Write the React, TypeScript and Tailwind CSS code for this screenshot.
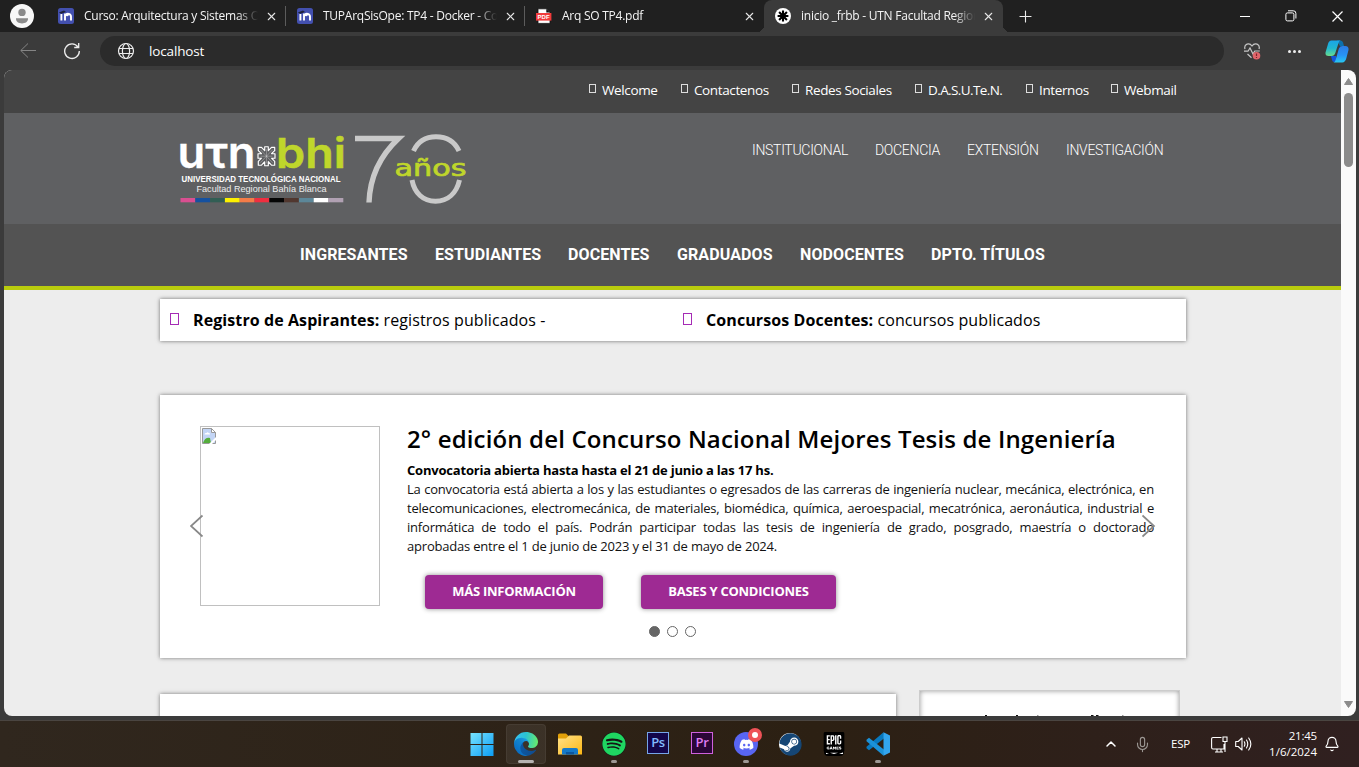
import React from "react";
import { X, Plus, ChevronUp, Mic, Bell } from "lucide-react";
import { FaSpotify, FaDiscord, FaSteam } from "react-icons/fa";
import { SiEpicgames } from "react-icons/si";

const UI = "font-['Open_Sans','Noto_Sans',sans-serif]";

function MoodleIcon() {
  return (
    <svg width="16" height="16" viewBox="0 0 16 16" className="shrink-0">
      <rect width="16" height="16" rx="2.5" fill="#4350af" />
      <path d="M3.4 6v6.6M7 12.6V8.8a1.9 1.9 0 0 1 3.4-1.1M7.4 7.2A3 3 0 0 1 13 8.8v3.8M7 5.5v7" stroke="#fff" strokeWidth="1.9" fill="none" />
      <path d="M0.8 4.6 6 2.6 8 4 3.4 5.8Z" fill="#20233c" />
    </svg>
  );
}

function PdfIcon() {
  return (
    <svg width="16" height="16" viewBox="0 0 16 16" className="shrink-0">
      <path d="M2 .8h8.5L14 4.2V15.4H2Z" fill="#fff" stroke="#111" strokeWidth=".8" />
      <path d="M10.3.8V4.4H14Z" fill="#111" />
      <rect x="0" y="5" width="15.4" height="7.6" fill="#f23b3b" />
      <text x="1.6" y="10.9" textLength="12" lengthAdjust="spacingAndGlyphs" fontSize="5.6" fontWeight="700" fill="#fff" fontFamily="Liberation Sans, sans-serif">PDF</text>
    </svg>
  );
}

function UtnIcon() {
  return (
    <svg width="16" height="16" viewBox="0 0 16 16" className="shrink-0">
      <circle cx="8" cy="8" r="8" fill="#fff" />
      <path d="M8 2.6v10.8M2.6 8h10.8M4.1 4.1l7.8 7.8M11.9 4.1l-7.8 7.8" stroke="#000" strokeWidth="2.1" />
      <circle cx="8" cy="8" r="2.6" fill="#000" />
    </svg>
  );
}

type TabProps = { icon: React.ReactNode; title: string; active?: boolean; divider?: boolean };

function Tab({ icon, title, active, divider }: TabProps) {
  return (
    <div className={"relative flex h-8 w-[239px] shrink-0 items-center pl-[11px] " + (active ? "rounded-t-lg bg-[#3b3b3b]" : "")}>
      {icon}
      <span className="ml-[10px] w-[174px] overflow-hidden whitespace-nowrap text-[12px] leading-4 tracking-[-0.25px] text-[#f4f4f4] [mask-image:linear-gradient(to_right,black_88%,transparent_100%)]">{title}</span>
      <X size={13} strokeWidth={2} className="ml-[7px] text-[#e6e6e6]" />
      {divider && <span className="absolute right-0 top-[6px] h-5 w-px bg-[#5c5c5c]" />}
      {active && <span className="absolute -left-[7px] bottom-0 size-[7px] bg-[radial-gradient(circle_at_0_0,transparent_7px,#3b3b3b_7px)]" />}
      {active && <span className="absolute -right-[7px] bottom-0 size-[7px] bg-[radial-gradient(circle_at_100%_0,transparent_7px,#3b3b3b_7px)]" />}
    </div>
  );
}

function TabBar() {
  return (
    <div className={"flex h-8 shrink-0 items-center bg-[#202020] " + UI}>
      <svg width="24" height="24" viewBox="0 0 24 24" className="ml-[10px] mr-[13px] shrink-0">
        <circle cx="12" cy="12" r="12" fill="#f7f7f7" />
        <circle cx="12" cy="8.4" r="3.7" fill="#8a8a8a" />
        <path d="M6 14.2h12v.6c0 2.9-2.7 4.6-6 4.6s-6-1.7-6-4.6Z" fill="#8a8a8a" />
      </svg>
      <Tab icon={<MoodleIcon />} title="Curso: Arquitectura y Sistemas Operativos" divider />
      <Tab icon={<MoodleIcon />} title="TUPArqSisOpe: TP4 - Docker - Contenedores" divider />
      <Tab icon={<PdfIcon />} title="Arq SO TP4.pdf" />
      <Tab icon={<UtnIcon />} title="inicio _frbb - UTN Facultad Regional" active />
      <Plus size={19} strokeWidth={1.4} className="ml-[13px] text-[#ececec]" />
      <div className="ml-auto flex items-center pr-4">
        <span className="h-px w-[10px] bg-white" />
        <svg width="12" height="12" viewBox="0 0 12 12" className="ml-[35px]" fill="none" stroke="#fff">
          <rect x=".9" y="2.9" width="8" height="8" rx="1.5" />
          <path d="M3 .8h5.2A2.6 2.6 0 0 1 10.9 3.5V8.5" />
        </svg>
        <svg width="11" height="11" viewBox="0 0 11 11" className="ml-[35px]" stroke="#fff" strokeWidth="1.2"><path d="M.5.5l10 10M10.5.5l-10 10" /></svg>
      </div>
    </div>
  );
}

function CopilotIcon() {
  return (
    <svg width="24" height="23" viewBox="0 0 24 23">
      <defs>
        <linearGradient id="cpA" x1="0" y1="0" x2="0" y2="1"><stop stopColor="#1aa5e8" /><stop offset=".5" stopColor="#20b6d0" /><stop offset="1" stopColor="#69dd8e" /></linearGradient>
        <linearGradient id="cpB" x1="0" y1="0" x2="0" y2="1"><stop stopColor="#2c7ce6" /><stop offset=".55" stopColor="#2793f5" /><stop offset="1" stopColor="#28c8f2" /></linearGradient>
      </defs>
      <path d="M12 .5h3.5q1.800 0 2.500 2l1.200 4h-4Z" fill="#0c70ad" />
      <path d="M6 16h5v6H9q-1.500 0-2-2Z" fill="#1455d8" />
      <path d="M6.500.5H15.500q-1.300.4-1.800 2L10.300 13q-.9 3-3.800 3H3.800Q0 16 .5 12.500L3 4Q3.800.6 6.500.5Z" fill="url(#cpA)" />
      <path d="M17.500 6h2.600q3.900.2 3.400 4L21.400 18q-1.100 4.300-4.200 4.500H8.500q1.500-.5 2.100-2.600L13.900 8.500Q14.700 6 17.500 6Z" fill="url(#cpB)" />
    </svg>
  );
}

function Toolbar() {
  return (
    <div className={"flex h-[38px] shrink-0 items-center bg-[#3b3b3b] " + UI}>
      <svg width="16" height="16" viewBox="0 0 16 16" className="ml-5" fill="none" stroke="#858585"><path d="M16 7.5H.8M8 .5l-7.200 7 7.200 7" /></svg>
      <svg width="18" height="18" viewBox="0 0 18 18" className="ml-[27px]" fill="none" stroke="#ececec" strokeWidth="1.35">
        <path d="M15 5A7.300 7.300 0 1 0 16.300 9M15.700 1v4.500h-4.500" />
      </svg>
      <div className="ml-[19px] flex h-[30px] w-[1124px] items-center rounded-full bg-[#2b2b2b] pl-[17px]">
        <svg width="18" height="18" viewBox="0 0 18 18" fill="none" stroke="#ececec" strokeWidth="1.2">
          <circle cx="9" cy="9" r="7.500" />
          <ellipse cx="9" cy="9" rx="3.600" ry="7.500" />
          <path d="M2 6.500H16M2 11.500H16" />
        </svg>
        <span className="ml-[14px] text-[13.5px] leading-5 tracking-[-0.15px] text-white">localhost</span>
      </div>
      <svg width="18" height="17" viewBox="0 0 18 17" className="ml-[19px]" fill="none" stroke="#c8c8c8" strokeWidth="1.2">
        <path d="M2 6C.6 1 6.300-.9 9 3c2.700-3.900 8.500-2 7 3M1 8.200h4L7 5l3 6 1.800-3h5M4.500 11l4 3.700" />
        <circle cx="13.500" cy="12.700" r="3.800" fill="#e1656b" stroke="none" />
        <path d="M13.500 10.500v2.600m0 .9v1" stroke="#7d2429" />
      </svg>
      <div className="ml-[27px] flex gap-[2px]"><i className="size-[3px] rounded-full bg-[#eee]" /><i className="size-[3px] rounded-full bg-[#eee]" /><i className="size-[3px] rounded-full bg-[#eee]" /></div>
      <div className="ml-[24px]"><CopilotIcon /></div>
    </div>
  );
}

const topLinks = [
  { t: "Welcome", w: "w-[92px] tracking-[-0.38px]" },
  { t: "Contactenos", w: "w-[111px] tracking-[-0.38px]" },
  { t: "Redes Sociales", w: "w-[123px] tracking-[-0.38px]" },
  { t: "D.A.S.U.Te.N.", w: "w-[111px] tracking-[-0.6px]" },
  { t: "Internos", w: "w-[85px] tracking-[-0.38px]" },
  { t: "Webmail", w: "w-[70px] tracking-[-0.38px]" },
];

const stripe = ["#d94f91", "#1551a0", "#315e54", "#fdf100", "#f47c48", "#f02e3f", "#050505", "#51372f", "#5c8799", "#ffffff", "#b1a1b3"];

function Logo() {
  return (
    <svg width="292" height="76" viewBox="178 131 292 76" aria-label="UTN bhi 70 años">
      <g fontFamily="Inter, DejaVu Sans, sans-serif" fontWeight="600">
        <text x="177.500" y="167.500" fontSize="43" fill="#fff" stroke="#fff" strokeWidth=".3" textLength="78" lengthAdjust="spacingAndGlyphs">uτn</text>
        <text x="276" y="167.500" fontSize="41" fill="#bfd62b" stroke="#bfd62b" strokeWidth=".5" textLength="70" lengthAdjust="spacingAndGlyphs">bhi</text>
      </g>
      <g transform="translate(266.500 156.200)" fill="none" stroke="#fff" strokeWidth="1.150" strokeLinejoin="round">
        <path d="M-1.800-9.500H1.800V-5.500L5-8.800 8.200-8.800V-5.500L5-2.500H8.500V2H5L8.200 5.200V9H5L1.800 5.500V9.500H-1.800V5.500L-5 9H-8.200V5.200L-5 2H-8.500V-2.500H-5L-8.200-5.500V-8.800H-5L-1.800-5.500Z" />
        <path d="M0-7V7M-6 0H6M-6-6.500 6 6.500M6-6.500-6 6.500" strokeWidth=".5" opacity=".55" />
      </g>
      <g fontFamily="Liberation Sans, Arial, sans-serif" fill="#fff">
        <text x="181.500" y="182" fontSize="8.400" fontWeight="700" textLength="159" lengthAdjust="spacingAndGlyphs">UNIVERSIDAD TECNOLÓGICA NACIONAL</text>
        <text x="196.500" y="192" fontSize="9.200" fill="#eee" textLength="130" lengthAdjust="spacingAndGlyphs">Facultad Regional Bahía Blanca</text>
      </g>
      {stripe.map((c, i) => <rect key={c} x={180.5 + i * 14.8} y="198" width="14.800" height="4.300" fill={c} />)}
      <path d="M355 138.500H398.500C383 153 370 174 369 202.500" fill="none" stroke="#c9c9c9" strokeWidth="5.400" />
      <path d="M413.500 151C418 141 426 136.700 436 136.700S454.500 141 459 151M412 180C414.500 193 423 201.200 435.500 201.200S456.500 193 459.500 180" fill="none" stroke="#c9c9c9" strokeWidth="5" />
      <text x="394.500" y="175.500" fontFamily="DejaVu Sans, sans-serif" fontSize="22.500" fill="#bfd62b" stroke="#bfd62b" strokeWidth=".7" textLength="72" lengthAdjust="spacingAndGlyphs">años</text>
    </svg>
  );
}

function SiteHeader() {
  return (
    <header className="shrink-0">
      <div className={"flex h-[43px] items-center bg-[#444] pl-[585px] text-[13.5px] text-white " + UI}>
        {topLinks.map((l) => (
          <span key={l.t} className={"flex shrink-0 items-center whitespace-nowrap " + l.w}>
            <i className="mb-[6px] mr-[6px] h-[9px] w-[7px] shrink-0 border border-[#ddd]" />
            <span className="-mt-[3px]">{l.t}</span>
          </span>
        ))}
      </div>
      <div className="flex h-[111px] bg-[#5f6062] pl-[174px] pt-[18px]">
        <Logo />
        <nav className="ml-[282px] mt-[9px] flex gap-[27px] font-['Roboto',sans-serif] text-[14px] font-light leading-5 tracking-[-0.3px] text-white">
          <span className="w-[96px] whitespace-nowrap">INSTITUCIONAL</span>
          <span className="w-[65px] whitespace-nowrap">DOCENCIA</span>
          <span className="w-[72px] whitespace-nowrap">EXTENSIÓN</span>
          <span className="w-[98px] whitespace-nowrap">INVESTIGACIÓN</span>
        </nav>
      </div>
      <nav className="flex h-[62px] items-center gap-[27px] bg-[#535353] pl-[296px] font-['Roboto',sans-serif] text-[16px] font-bold tracking-[0.1px] text-white">
        <span className="w-[108px] whitespace-nowrap">INGRESANTES</span>
        <span className="w-[106px] whitespace-nowrap">ESTUDIANTES</span>
        <span className="w-[82px] whitespace-nowrap">DOCENTES</span>
        <span className="w-[96px] whitespace-nowrap">GRADUADOS</span>
        <span className="w-[104px] whitespace-nowrap">NODOCENTES</span>
        <span className="whitespace-nowrap">DPTO. TÍTULOS</span>
      </nav>
      <div className="h-1 bg-[#b9cc0d]" />
    </header>
  );
}

function BrokenImage() {
  return (
    <div className="h-[180px] w-[180px] shrink-0 border border-[#c0c0c0] p-px">
      <svg width="14" height="16" viewBox="0 0 14 16">
        <path d="M.5.5h9l4 4v11H.5Z" fill="#c3d5f5" stroke="#999" />
        <path d="M9.500.5v4h4Z" fill="#fff" stroke="#999" />
        <path d="M2.500 6.500q0-2 2-1.500 1-1.500 2.200 0 1.800 0 1.300 1.500Z" fill="#fff" />
        <path d="M1 15q2-6 7-5l1 5Z" fill="#55ad3c" />
        <path d="M7 16 14 9v3l-4 4Z" fill="#fff" />
      </svg>
    </div>
  );
}

const lines = [
  "La convocatoria está abierta a los y las estudiantes o egresados de las carreras de ingeniería nuclear, mecánica, electrónica, en",
  "telecomunicaciones, electromecánica, de materiales, biomédica, química, aeroespacial, mecatrónica, aeronáutica, industrial e",
  "informática de todo el país. Podrán participar todas las tesis de ingeniería de grado, posgrado, maestría o doctorado",
];

function Carousel() {
  return (
    <section className="relative mt-[54px] h-[263px] w-[1026px] bg-white pl-10 pt-[31px] shadow-[0_0_4px_rgba(0,0,0,.5)]">
      <div className="flex h-[183px]">
        <BrokenImage />
        <div className="ml-[27px] w-[747px]">
          <h2 className="mt-[-3px] whitespace-nowrap text-[24px] font-semibold leading-8 tracking-[0.15px] text-black">2° edición del Concurso Nacional Mejores Tesis de Ingeniería</h2>
          <div className="mt-[6px] text-[13px] leading-[19px] tracking-[-0.2px] text-[#111]">
            <p className="whitespace-nowrap font-bold text-black">Convocatoria abierta hasta hasta el 21 de junio a las 17 hs.</p>
            {lines.map((l) => (
              <p key={l} className="whitespace-nowrap [text-align-last:justify]">{l}</p>
            ))}
            <p className="whitespace-nowrap">aprobadas entre el 1 de junio de 2023 y el 31 de mayo de 2024.</p>
          </div>
          <div className="ml-[18px] mt-[19px] flex gap-[38px] text-[13px] font-bold tracking-[-0.25px] text-white">
            <button className="h-[34px] w-[178px] whitespace-nowrap rounded bg-[#9e2a93] shadow-[0_0_5px_rgba(0,0,0,.45)]">MÁS INFORMACIÓN</button>
            <button className="h-[34px] w-[195px] whitespace-nowrap rounded bg-[#9e2a93] shadow-[0_0_5px_rgba(0,0,0,.45)]">BASES Y CONDICIONES</button>
          </div>
        </div>
      </div>
      <div className="ml-[449px] mt-[17px] flex gap-[7px]">
        <i className="size-[11px] rounded-full border border-[#666] bg-[#666]" />
        <i className="size-[11px] rounded-full border border-[#666]" />
        <i className="size-[11px] rounded-full border border-[#666]" />
      </div>
      <svg width="14" height="24" viewBox="0 0 14 24" className="absolute left-[30px] top-[119px]" fill="none" stroke="#888" strokeWidth="1.7"><path d="M12.500 1.500 1 12l11.500 10.500" /></svg>
      <svg width="14" height="24" viewBox="0 0 14 24" className="absolute left-[982px] top-[119px]" fill="none" stroke="#888" strokeWidth="1.7"><path d="M.5 1.500 12 12 .5 22.500" /></svg>
    </section>
  );
}

function Page() {
  return (
    <div className="flex min-w-0 flex-1 flex-col overflow-hidden bg-[#ededed]">
      <SiteHeader />
      <main className={"ml-[156px] " + UI}>
        <section className="mt-[9px] flex h-[42px] w-[1026px] items-center bg-white text-[16px] leading-6 tracking-[0.09px] text-black shadow-[0_0_4px_rgba(0,0,0,.55)]">
          <div className="flex w-[513px] items-center whitespace-nowrap pl-[10px]">
            <i className="mb-[2px] mr-[14px] h-[12px] w-[9px] border border-[#a52bb5]" />
            <span><b>Registro de Aspirantes:</b> registros publicados -</span>
          </div>
          <div className="flex items-center whitespace-nowrap pl-[10px]">
            <i className="mb-[2px] mr-[14px] h-[12px] w-[9px] border border-[#a52bb5]" />
            <span><b>Concursos Docentes:</b> concursos publicados</span>
          </div>
        </section>
        <Carousel />
        <div className="mt-8 flex gap-[23px]">
          <div className="mt-1 h-10 w-[736px] bg-white shadow-[0_0_4px_rgba(0,0,0,.5)]" />
          <div className="h-10 w-[261px] border border-[#ccc] bg-white shadow-[inset_0_0_5px_rgba(0,0,0,.4)]">
            <svg width="259" height="26" viewBox="0 0 259 26">
              <path d="M65 24.500h2M96 24.500h2M171 24.500h2.500M176 24.500h2.500" stroke="#111" strokeWidth="1.2" />
              <path d="M117 24.500h1.500M202 24.500h1.500" stroke="#999" />
            </svg>
          </div>
        </div>
      </main>
    </div>
  );
}

function Scrollbar() {
  return (
    <div className="flex w-[15px] shrink-0 flex-col items-center bg-[#fafafa]">
      <svg width="9" height="7" viewBox="0 0 9 7" className="mt-2"><path d="M4.500.5 8.500 6.500H.5Z" fill="#8b8b8b" stroke="#8b8b8b" strokeLinejoin="round" /></svg>
      <span className="mt-2 h-[74px] w-[9px] rounded-full bg-[#8b8b8b]" />
      <svg width="9" height="7" viewBox="0 0 9 7" className="mb-2 mt-auto"><path d="M4.500 6.500 8.500.5H.5Z" fill="#8b8b8b" stroke="#8b8b8b" strokeLinejoin="round" /></svg>
    </div>
  );
}

function EdgeIcon() {
  return (
    <svg width="24" height="24" viewBox="0 0 256 256">
      <defs>
        <linearGradient id="e1" x1="58" y1="177" x2="237" y2="177" gradientUnits="userSpaceOnUse"><stop stopColor="#0c59a4" /><stop offset="1" stopColor="#114a8b" /></linearGradient>
        <linearGradient id="e2" x1="157" y1="98" x2="46" y2="220" gradientUnits="userSpaceOnUse"><stop stopColor="#1b9de2" /><stop offset=".4" stopColor="#1183cf" /><stop offset="1" stopColor="#0a6ec2" /></linearGradient>
        <linearGradient id="e3" x1="10" y1="70" x2="250" y2="110" gradientUnits="userSpaceOnUse"><stop stopColor="#35c1f1" /><stop offset=".45" stopColor="#2bc3d2" /><stop offset="1" stopColor="#66eb6e" /></linearGradient>
      </defs>
      <path fill="url(#e1)" d="M231.070 190.540c-3.420 1.800-6.940 3.380-10.540 4.720a101.930 101.930 0 0 1-35.900 6.460c-47.320 0-88.540-32.550-88.540-74.320A31.480 31.480 0 0 1 112.550 99.700c-42.800 1.800-53.800 46.400-53.800 72.530 0 73.880 68.090 81.370 82.760 81.370 7.910 0 19.840-2.300 27-4.560l1.310-.44a128.340 128.340 0 0 0 66.600-52.800 4 4 0 0 0-5.350-5.260z" />
      <path fill="url(#e2)" d="M105.730 241.420a79.200 79.200 0 0 1-22.740-21.340 80.720 80.720 0 0 1 29.530-120.380c3.120-1.470 8.450-4.130 15.540-4a32.350 32.350 0 0 1 25.690 13 31.880 31.880 0 0 1 6.360 18.660c0-.21 24.460-79.600-80-79.600-43.900 0-80 41.660-80 78.210a130.150 130.150 0 0 0 12.110 56 128 128 0 0 0 156.380 67.110 75.550 75.550 0 0 1-62.780-8z" />
      <path fill="url(#e3)" d="M152.330 148.860c-.81 1.050-3.300 2.500-3.300 5.660 0 2.610 1.700 5.120 4.720 7.230 14.380 10 41.490 8.680 41.560 8.680a59.560 59.560 0 0 0 30.270-8.350A61.380 61.380 0 0 0 256 109.200c.26-22.410-8-37.310-11.340-43.910C223.460 23.840 177.720 0 128 0A128 128 0 0 0 0 126.200c.48-36.540 36.800-66.050 80-66.050 3.500 0 23.460.34 42 10.070 16.340 8.580 24.900 18.940 30.850 29.210 6.180 10.670 7.280 24.150 7.280 29.520 0 5.370-2.740 13.330-7.800 19.910z" />
    </svg>
  );
}

function AdobeIcon({ label, cls }: { label: string; cls: string }) {
  return <span className={"flex size-[22px] items-center justify-center border pb-px text-[13px] font-semibold leading-none tracking-[-0.4px] " + cls}>{label}</span>;
}

function AppSlot({ children, active, dot }: { children: React.ReactNode; active?: boolean; dot?: boolean }) {
  return (
    <div className="relative flex h-[46px] w-11 shrink-0 items-center justify-center">
      {active && <span className="absolute inset-x-[2px] inset-y-[3px] rounded border border-white/5 bg-white/[.07]" />}
      <span className="relative flex items-center justify-center">{children}</span>
      {active && <span className="absolute bottom-[4px] h-[3px] w-4 rounded-full bg-[#b6b3b1]" />}
      {dot && <span className="absolute bottom-[4px] h-[3px] w-[6px] rounded-full bg-[#9d9894]" />}
    </div>
  );
}

function Taskbar() {
  return (
    <div className={"flex h-[46px] shrink-0 items-center bg-linear-to-r from-[#30271e] via-[#2c2013] via-60% to-[#302020] pl-[460px] text-white " + UI}>
      <AppSlot>
        <svg width="24" height="24" viewBox="0 0 24 24">
          <defs><linearGradient id="win" x1="0" y1="0" x2="24" y2="24" gradientUnits="userSpaceOnUse"><stop stopColor="#7be6ff" /><stop offset="1" stopColor="#0a9cf5" /></linearGradient></defs>
          <path d="M.5 1H11.500V12H.5ZM12.500 1H23.500V12H12.500ZM.5 13H11.500V24H.5ZM12.500 13H23.500V24H12.500Z" fill="url(#win)" />
        </svg>
      </AppSlot>
      <AppSlot active><EdgeIcon /></AppSlot>
      <AppSlot>
        <svg width="24" height="22" viewBox="0 0 24 22">
          <defs><linearGradient id="fo" x1="0" y1="0" x2="1" y2="1"><stop stopColor="#ffe28a" /><stop offset="1" stopColor="#fdb714" /></linearGradient></defs>
          <path d="M0 2Q0 .5 1.500.5H8L10.500 3V8H0Z" fill="#e2a009" />
          <path d="M0 5.500H8L11 2.500H22.500Q24 2.500 24 4V21.500H0Z" fill="url(#fo)" />
          <path d="M4 21.500V17Q4 15 6 15H18Q20 15 20 17V21.500Z" fill="#1479c9" />
          <path d="M8 21.500V19H16V21.500Z" fill="#0b57a0" />
        </svg>
      </AppSlot>
      <AppSlot dot><span className="flex size-6 items-center justify-center rounded-full bg-[#151515]"><FaSpotify size={24} color="#1fd661" /></span></AppSlot>
      <AppSlot><span className="mb-[3px]"><AdobeIcon label="Ps" cls="border-[#75a5e8] bg-[#13064b] text-[#82bcff]" /></span></AppSlot>
      <AppSlot><span className="mb-[3px]"><AdobeIcon label="Pr" cls="border-[#cf61dd] bg-[#2b0637] text-[#df7cf2]" /></span></AppSlot>
      <AppSlot dot>
        <span className="flex size-6 items-center justify-center rounded-full bg-[#5865f2]"><FaDiscord size={15} color="#fff" /></span>
        <span className="absolute -right-[4px] -top-[4px] flex size-[14px] items-center justify-center rounded-full bg-[#ee5257]"><i className="size-[6px] rounded-full bg-white" /></span>
      </AppSlot>
      <AppSlot><span className="flex size-[22px] items-center justify-center rounded-full bg-white"><FaSteam size={23} className="shrink-0 text-[#154675]" /></span></AppSlot>
      <AppSlot><span className="flex h-[24px] w-[20px] items-center justify-center rounded-sm bg-black"><span className="flex h-[20px] w-[17px] items-center justify-center bg-white"><SiEpicgames size={24} className="shrink-0 text-black" /></span></span></AppSlot>
      <AppSlot dot>
        <svg width="24" height="24" viewBox="0 0 24 24">
          <path d="M17.500.3 18.500 6 3 18.200.5 16.300V14.700Z" fill="#0879bf" />
          <path d="M17.500 23.700 18.500 18 3 5.800.5 7.700V9.300Z" fill="#1b91d7" />
          <path d="M17.500.3 24 3.400V20.600L17.500 23.700Z" fill="#32a5ee" />
        </svg>
      </AppSlot>
      <div className="ml-auto flex items-center pr-[19px]">
        <ChevronUp size={16} strokeWidth={2.2} />
        <Mic size={17} strokeWidth={1.6} className="ml-[15px] text-[#9b9692]" />
        <span className="ml-[20px] w-[20px] whitespace-nowrap text-[11.5px] tracking-[-0.2px]">ESP</span>
        <svg width="17" height="17" viewBox="0 0 17 17" className="ml-[20px]" fill="none" stroke="#fff" strokeWidth="1.1">
          <path d="M10.500 1.500H2Q.6 1.500.6 3v8.500Q.6 13 2 13H13V8M4 16h8M6 13v3M10 13v3M12 1h4v4.500h-4ZM14 5.500V16" />
        </svg>
        <svg width="17" height="16" viewBox="0 0 17 16" className="ml-[7px]" fill="none" stroke="#fff" strokeWidth="1.1" strokeLinejoin="round" strokeLinecap="round">
          <path d="M.7 5.500H3.200L7 2V14L3.200 10.500H.7ZM9.300 5.800Q10.500 8 9.300 10.200M11.500 4Q14 8 11.500 12M13.700 2Q18 8 13.700 14" />
        </svg>
        <div className="ml-[14px] w-[51px] text-right text-[11.5px] leading-4">
          <div className="tracking-[-0.2px]">21:45</div>
          <div className="whitespace-nowrap">1/6/2024</div>
        </div>
        <Bell size={16} strokeWidth={1.7} className="ml-[7px]" />
      </div>
    </div>
  );
}

export default function App() {
  return (
    <div className="flex h-[767px] w-[1359px] flex-col overflow-hidden bg-[#3b3b3b]">
      <TabBar />
      <Toolbar />
      <div className="ml-1 mr-[3px] flex h-[646px] shrink-0 overflow-hidden rounded-lg">
        <Page />
        <Scrollbar />
      </div>
      <div className="h-[5px] shrink-0 border-b border-[#4a4541]" />
      <Taskbar />
    </div>
  );
}
